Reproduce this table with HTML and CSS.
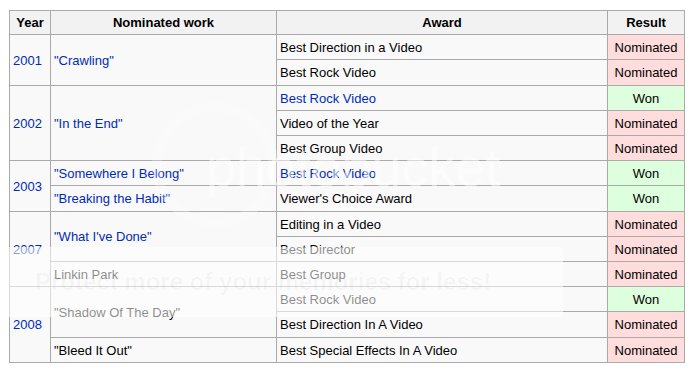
FILE: index.html
```html
<!DOCTYPE html>
<html>
<head>
<meta charset="utf-8">
<link rel="stylesheet" href="styles.css">
</head>
<body>
<div class="page">
<table class="wikitable">
  <colgroup>
    <col class="c-year"><col class="c-work"><col class="c-award"><col class="c-result">
  </colgroup>
  <thead>
    <tr><th>Year</th><th>Nominated work</th><th>Award</th><th>Result</th></tr>
  </thead>
  <tbody>
    <tr><td rowspan="2" class="link">2001</td><td rowspan="2" class="link">"Crawling"</td><td>Best Direction in a Video</td><td class="nom">Nominated</td></tr>
    <tr><td>Best Rock Video</td><td class="nom">Nominated</td></tr>
    <tr><td rowspan="3" class="link">2002</td><td rowspan="3" class="link">"In the End"</td><td class="link">Best Rock Video</td><td class="won">Won</td></tr>
    <tr><td>Video of the Year</td><td class="nom">Nominated</td></tr>
    <tr><td>Best Group Video</td><td class="nom">Nominated</td></tr>
    <tr><td rowspan="2" class="link">2003</td><td class="link">"Somewhere I Belong"</td><td class="link">Best Rock Video</td><td class="won">Won</td></tr>
    <tr><td class="link">"Breaking the Habit"</td><td>Viewer's Choice Award</td><td class="won">Won</td></tr>
    <tr><td rowspan="3" class="link">2007</td><td rowspan="2" class="link">"What I've Done"</td><td>Editing in a Video</td><td class="nom">Nominated</td></tr>
    <tr><td>Best Director</td><td class="nom">Nominated</td></tr>
    <tr><td>Linkin Park</td><td>Best Group</td><td class="nom">Nominated</td></tr>
    <tr><td rowspan="3" class="link">2008</td><td rowspan="2">"Shadow Of The Day"</td><td>Best Rock Video</td><td class="won">Won</td></tr>
    <tr><td>Best Direction In A Video</td><td class="nom">Nominated</td></tr>
    <tr><td>"Bleed It Out"</td><td>Best Special Effects In A Video</td><td class="nom">Nominated</td></tr>
  </tbody>
</table>
</div>
<div class="wm-logo">
  <svg width="130" height="130" viewBox="0 0 130 130"><circle cx="65" cy="65" r="58" fill="none" stroke="#fff" stroke-opacity="0.5" stroke-width="10"/></svg>
</div>
<div class="wm-word">photobucket</div>
<div class="wm-banner"><span>Protect more of your memories for less!</span></div>
</body>
</html>
```
FILE: styles.css
```css
html, body {
  margin: 0;
  padding: 0;
  background: #fff;
}
body {
  position: relative;
  width: 695px;
  height: 376px;
  overflow: hidden;
  font-family: "Liberation Sans", Arial, sans-serif;
}
.page {
  padding: 10px 0 0 9px;
}
.wikitable {
  border-collapse: collapse;
  table-layout: fixed;
  width: 675px;
  background: #f9f9f9;
  border: 1px solid #aaa;
  font-size: 13px;
  color: #000;
}
.c-year { width: 41px; }
.c-work { width: 226px; }
.c-award { width: 331px; }
.c-result { width: 77px; }
.wikitable th,
.wikitable td {
  border: 1px solid #aaa;
  padding: 3px 3px 2px 3px;
  line-height: 19.2px;
  text-align: left;
  vertical-align: middle;
  white-space: nowrap;
}
.wikitable th {
  background: #f2f2f2;
  text-align: center;
  font-weight: bold;
  padding-top: 2px;
  padding-bottom: 2px;
}
.wikitable td.link { color: #002bb8; }
.wikitable td.nom {
  background: #ffdddd;
  text-align: center;
}
.wikitable td.won {
  background: #ddffdd;
  text-align: center;
}
.wm-logo {
  position: absolute;
  left: 150px;
  top: 100px;
  width: 130px;
  height: 130px;
  opacity: 0.5;
}
.wm-word {
  position: absolute;
  left: 206px;
  top: 127px;
  font-size: 54px;
  line-height: 80px;
  color: rgba(255, 255, 255, 0.5);
}
.wm-banner {
  position: absolute;
  left: 0;
  top: 247px;
  width: 563px;
  height: 70px;
  background: rgba(255, 255, 255, 0.55);
  display: flex;
  align-items: center;
  padding-left: 35px;
  box-sizing: border-box;
}
.wm-banner span {
  font-family: "Liberation Sans", Arial, sans-serif;
  font-weight: bold;
  font-size: 24px;
  line-height: 28px;
  color: rgba(0, 0, 0, 0.035);
  white-space: nowrap;
}
```
